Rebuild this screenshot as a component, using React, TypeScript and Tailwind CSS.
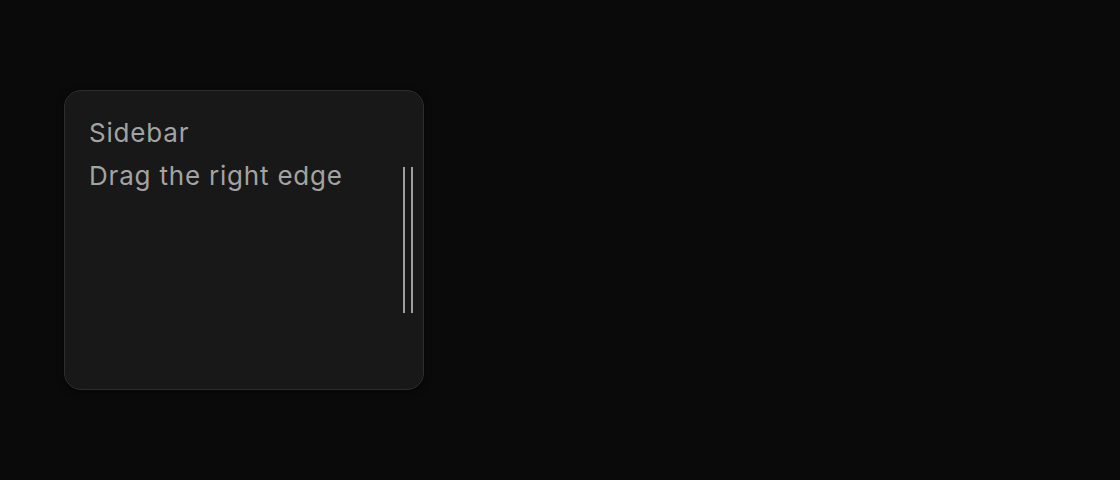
export default function App() {
  return (
    <div className="min-h-[480px] w-full bg-[#0a0a0a] pt-[90px] pl-[64px]" style={{ fontFamily: "Inter, 'Liberation Sans', sans-serif" }}>
      {/* Resizable sidebar card */}
      <div className="relative h-[300px] w-[360px] rounded-[17px] border border-[#2e2e2e] bg-[#181818] px-6 pt-5 shadow-[0_2px_6px_rgba(0,0,0,0.5)]">
        <div className="text-[26px] leading-[43px] tracking-[0.8px] text-[#a3a3a3]">Sidebar</div>
        <div className="text-[26px] leading-[43px] tracking-[0.8px] text-[#a3a3a3]">Drag the right edge</div>

        {/* Drag handle */}
        <div className="absolute right-[10px] top-1/2 flex h-[146px] -translate-y-1/2 gap-[6px]">
          <span className="block h-full w-[2px] bg-[#9e9e9e]"></span>
          <span className="block h-full w-[2px] bg-[#9e9e9e]"></span>
        </div>
      </div>
    </div>
  )
}
